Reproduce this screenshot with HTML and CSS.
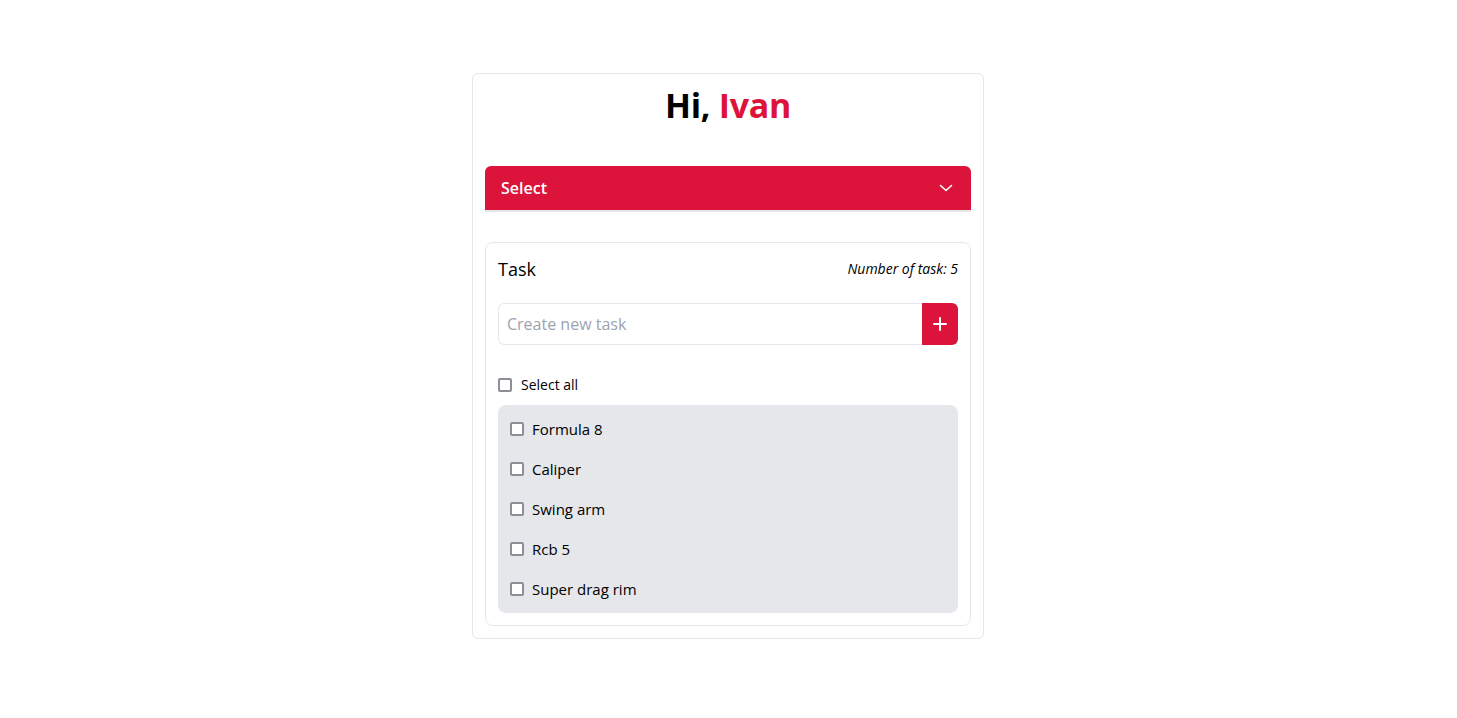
FILE: index.html
```html
<!DOCTYPE html>
<html lang="en">
<head>
<meta charset="utf-8">
<title>Tasks</title>
<link rel="stylesheet" href="styles.css">
</head>
<body>
<main class="card">
  <h1 class="title">Hi, <span class="name">Ivan</span></h1>
  <div class="select">
    <span class="select-label">Select</span>
    <svg class="chevron" width="14" height="8" viewBox="0 0 14 8"><path d="M1.5 1.5 L7 6.5 L12.5 1.5" fill="none" stroke="#fff" stroke-width="1.6" stroke-linecap="round" stroke-linejoin="round"/></svg>
  </div>
  <section class="panel">
    <div class="panel-head">
      <span class="panel-title">Task</span>
      <span class="count">Number of task: 5</span>
    </div>
    <form class="new-task">
      <input class="task-input" type="text" placeholder="Create new task">
      <button class="add-btn" type="button" aria-label="Add">
        <svg width="16" height="16" viewBox="0 0 16 16"><path d="M8 2 V14 M2 8 H14" stroke="#fff" stroke-width="2" stroke-linecap="round"/></svg>
      </button>
    </form>
    <label class="select-all"><span class="box"></span>Select all</label>
    <ul class="list">
      <li class="item"><span class="box"></span>Formula 8</li>
      <li class="item"><span class="box"></span>Caliper</li>
      <li class="item"><span class="box"></span>Swing arm</li>
      <li class="item"><span class="box"></span>Rcb 5</li>
      <li class="item"><span class="box"></span>Super drag rim</li>
    </ul>
  </section>
</main>
</body>
</html>
```

FILE: styles.css
```css
* { box-sizing: border-box; }
html, body { margin: 0; padding: 0; background: #fff; }
body {
  font-family: "Open Sans", "Noto Sans", sans-serif;
  color: #000;
  padding: 73px 1px 0 0;
}
.card {
  width: 512px;
  margin: 0 auto;
  border: 1px solid #e5e7eb;
  border-radius: 6px;
  padding: 12px;
}
.title {
  margin: 0;
  text-align: center;
  font-size: 34px;
  line-height: 39px;
  font-weight: 700;
  letter-spacing: -0.3px;
}
.name { color: #dc143c; }
.select {
  margin-top: 41px;
  height: 46px;
  background: #dc143c;
  border-radius: 6px 6px 0 0;
  border-bottom: 2px solid #e5e7eb;
  display: flex;
  align-items: center;
  justify-content: space-between;
  padding: 0 18px 1px 16px;
  color: #fff;
}
.select-label { font-size: 16px; font-weight: 600; }
.chevron { display: block; }
.panel {
  margin-top: 30px;
  border: 1px solid #e5e7eb;
  border-radius: 8px;
  padding: 12px;
}
.panel-head {
  display: flex;
  justify-content: space-between;
  align-items: center;
  height: 28px;
  padding-bottom: 1px;
}
.panel-title { font-size: 18px; }
.count { font-size: 14px; font-style: italic; }
.new-task {
  display: flex;
  margin: 20px 0 0;
  height: 42px;
}
.task-input {
  flex: 1;
  min-width: 0;
  border: 1px solid #e5e7eb;
  border-right: none;
  border-radius: 6px 0 0 6px;
  padding: 0 8px 1px;
  font: inherit;
  font-size: 16px;
  outline: none;
}
.task-input::placeholder { color: #9ca3af; }
.add-btn {
  width: 36px;
  border: none;
  background: #dc143c;
  border-radius: 0 6px 6px 0;
  display: flex;
  align-items: center;
  justify-content: center;
  padding: 0;
}
.select-all {
  margin-top: 30px;
  display: flex;
  align-items: center;
  gap: 9px;
  font-size: 14px;
  line-height: 20px;
}
.box {
  width: 14px;
  height: 14px;
  flex: none;
  border: 2px solid #8e8e96;
  border-radius: 2px;
  background: #fff;
}
.list {
  list-style: none;
  margin: 10px 0 0;
  padding: 4px 12px;
  background: #e5e7eb;
  border-radius: 8px;
}
.item {
  display: flex;
  align-items: center;
  gap: 8px;
  height: 40px;
  font-size: 15px;
  padding-bottom: 1px;
}
```
